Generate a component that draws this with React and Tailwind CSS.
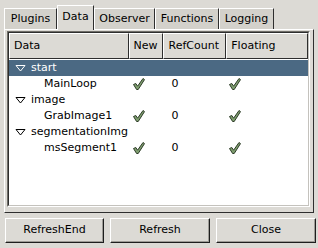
import React from 'react';

const Check = () => (
  <svg width="12" height="12" viewBox="0 0 12 12" className="block">
    <polygon
      points="0.5,6.5 2.8,5.5 4.6,8.2 10,0.5 11.5,1.6 5.2,11.5 3.6,11.5"
      fill="#7f9f6f"
      stroke="#2c3a27"
      strokeWidth="1"
      strokeLinejoin="round"
    />
  </svg>
);

const Expander = ({ light }) => (
  <svg width="11" height="7" viewBox="0 0 11 7" className="block">
    <polygon
      points="1,0.5 10,0.5 5.5,6"
      fill="none"
      stroke={light ? '#ffffff' : '#000000'}
      strokeWidth="1"
    />
  </svg>
);

const rows = [
  { label: 'start', parent: true, selected: true },
  { label: 'MainLoop', check: true },
  { label: 'image', parent: true },
  { label: 'GrabImage1', check: true },
  { label: 'segmentationImg', parent: true },
  { label: 'msSegment1', check: true },
];

const tabs = [
  { name: 'Plugins', w: 'w-[53px]' },
  { name: 'Data', w: 'w-[37px]', active: true },
  { name: 'Observer', w: 'w-[61px]' },
  { name: 'Functions', w: 'w-[64px]' },
  { name: 'Logging', w: 'w-[55px]' },
];

const headers = [
  { name: 'Data', w: 'w-[120px]' },
  { name: 'New', w: 'w-[35px]' },
  { name: 'RefCount', w: 'w-[63px]' },
  { name: 'Floating', w: 'w-[82px]' },
];

const buttons = [
  { name: 'RefreshEnd', w: 'w-[99px]' },
  { name: 'Refresh', w: 'w-[100px]' },
  { name: 'Close', w: 'w-[100px]' },
];

export default function App() {
  return (
    <div
      className="w-[318px] h-[248px] bg-[#dcdad5] text-[11px] text-black overflow-hidden flex flex-col"
      style={{ fontFamily: '"DejaVu Sans", sans-serif' }}
    >
      {/* tabs */}
      <div className="flex items-end pl-[4px] pt-[5px] h-[29px] relative z-10">
        {tabs.map((t) =>
          t.active ? (
            <div
              key={t.name}
              className={`${t.w} h-[25px] -mb-px bg-[#dcdad5] border-l border-t border-white border-r border-r-[#2e2e2e] flex items-center justify-center pb-[2px]`}
            >
              {t.name}
            </div>
          ) : (
            <div
              key={t.name}
              className={`${t.w} h-[21px] bg-[#d3d1cb] border-l border-t border-white border-r border-r-[#2e2e2e] flex items-center justify-center`}
            >
              {t.name}
            </div>
          )
        )}
      </div>

      {/* notebook panel */}
      <div className="mx-[4px] w-[310px] h-[184px] border border-white border-r-[#2e2e2e] border-b-[#2e2e2e] pt-[1px] pl-[2px] pr-[2px] pb-[5px]">
        <div className="w-[303px] h-[176px] border border-[#6f6d68] border-b-white border-r-white">
          <div className="h-full bg-white border border-[#2e2e2e] border-b-[#c4c2bd] border-r-[#c4c2bd]">
            {/* header */}
            <div className="flex h-[26px]">
              {headers.map((h) => (
                <div
                  key={h.name}
                  className={`${h.w} h-full bg-[#dcdad5] border-l border-t border-white border-r border-b border-r-[#2e2e2e] border-b-[#2e2e2e] flex items-center pl-[4px]`}
                >
                  {h.name}
                </div>
              ))}
            </div>
            {/* rows */}
            <div className="pt-[1px]">
              {rows.map((r) => (
                <div
                  key={r.label}
                  className={`flex h-[16px] items-center ${r.selected ? 'bg-[#4b6983] text-white' : ''}`}
                >
                  <div className="w-[120px] flex items-center">
                    {r.parent ? (
                      <>
                        <div className="ml-[6px] w-[16px]">
                          <Expander light={r.selected} />
                        </div>
                        <span>{r.label}</span>
                      </>
                    ) : (
                      <span className="ml-[35px]">{r.label}</span>
                    )}
                  </div>
                  <div className="w-[35px] pl-[4px]">{r.check && <Check />}</div>
                  <div className="w-[63px] pl-[8px]">{r.check && '0'}</div>
                  <div className="w-[82px] pl-[3px]">{r.check && <Check />}</div>
                </div>
              ))}
            </div>
          </div>
        </div>
      </div>

      {/* buttons */}
      <div className="flex gap-[6px] pl-[5px] pt-[5px]">
        {buttons.map((b) => (
          <div
            key={b.name}
            className={`${b.w} h-[25px] border border-white border-r-[#1e1e1e] border-b-[#1e1e1e] shadow-[inset_-1px_-1px_0_#9d9b96] flex items-center justify-center`}
          >
            {b.name}
          </div>
        ))}
      </div>
    </div>
  );
}
